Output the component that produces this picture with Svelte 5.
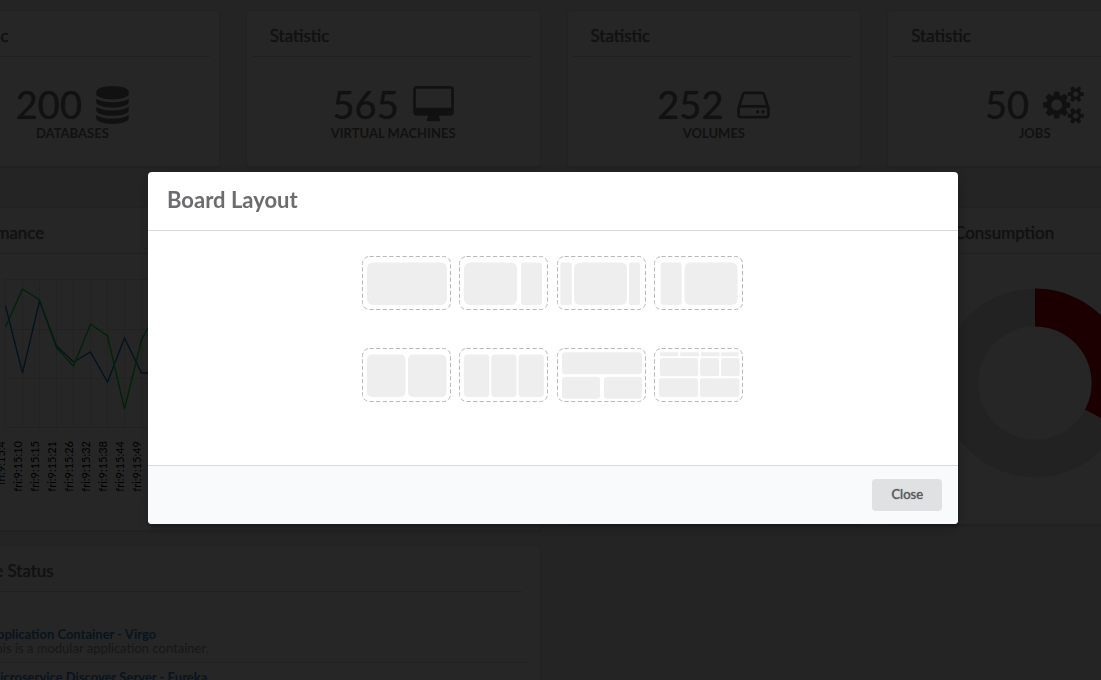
<script>
  const stats = [
    {
      value: '200', label: 'Databases', width: 33, box: '128 0 1536 1792',
      path: 'M896 768q237 0 443-43t325-127v170q0 69-103 128t-280 93.5-385 34.5-385-34.5-280-93.5-103-128v-170q119 84 325 127t443 43zm0 768q237 0 443-43t325-127v170q0 69-103 128t-280 93.5-385 34.5-385-34.5-280-93.5-103-128v-170q119 84 325 127t443 43zm0-384q237 0 443-43t325-127v170q0 69-103 128t-280 93.5-385 34.5-385-34.5-280-93.5-103-128v-170q119 84 325 127t443 43zm0-1152q208 0 385 34.5t280 93.5 103 128v128q0 69-103 128t-280 93.5-385 34.5-385-34.5-280-93.5-103-128v-128q0-69 103-128t280-93.5 385-34.5z'
    },
    {
      value: '565', label: 'Virtual Machines', width: 41, box: '0 0 1920 1792',
      path: 'M1792 992v-832q0-13-9.5-22.5t-22.5-9.5h-1600q-13 0-22.5 9.5t-9.5 22.5v832q0 13 9.5 22.5t22.5 9.5h1600q13 0 22.5-9.5t9.5-22.5zm128-832v1088q0 66-47 113t-113 47h-544q0 37 16 77.5t32 71 16 43.5q0 26-19 45t-45 19h-512q-26 0-45-19t-19-45q0-14 16-44t32-70 16-78h-544q-66 0-113-47t-47-113v-1088q0-66 47-113t113-47h1600q66 0 113 47t47 113z'
    },
    {
      value: '252', label: 'Volumes', width: 33, box: '128 0 1536 1792',
      path: 'M1168 1216q0 33-23.5 56.5t-56.5 23.5-56.5-23.5-23.5-56.5 23.5-56.5 56.5-23.5 56.5 23.5 23.5 56.5zm256 0q0 33-23.5 56.5t-56.5 23.5-56.5-23.5-23.5-56.5 23.5-56.5 56.5-23.5 56.5 23.5 23.5 56.5zm112 160v-320q0-13-9.5-22.5t-22.5-9.5h-1216q-13 0-22.5 9.5t-9.5 22.5v320q0 13 9.5 22.5t22.5 9.5h1216q13 0 22.5-9.5t9.5-22.5zm-1230-480h1180l-157-482q-4-13-16-21.5t-26-8.5h-782q-14 0-26 8.5t-16 21.5zm1358 160v320q0 66-47 113t-113 47h-1216q-66 0-113-47t-47-113v-320q0-25 16-75l197-606q17-53 63-86t101-33h782q55 0 101 33t63 86l197 606q16 50 16 75z'
    },
    {
      value: '50', label: 'Jobs', width: 41, box: '0 0 1920 1792',
      path: 'M896 896q0-106-75-181t-181-75-181 75-75 181 75 181 181 75 181-75 75-181zm768 512q0-52-38-90t-90-38-90 38-38 90q0 53 37.5 90.5t90.5 37.5 90.5-37.5 37.5-90.5zm0-1024q0-52-38-90t-90-38-90 38-38 90q0 53 37.5 90.5t90.5 37.5 90.5-37.5 37.5-90.5zm-384 421v185q0 10-7 19.5t-16 10.5l-155 24q-11 35-32 76 34 48 90 115 7 11 7 20 0 12-7 19-23 30-82.5 89.5t-78.5 59.5q-11 0-21-7l-115-90q-37 19-77 31-11 108-23 155-7 24-30 24h-186q-11 0-20-7.5t-10-17.5l-23-153q-34-10-75-31l-118 89q-7 7-20 7-11 0-21-8-144-133-144-160 0-9 7-19 10-14 41-53t47-61q-23-44-35-82l-152-24q-10-1-17-9.5t-7-19.5v-185q0-10 7-19.5t16-10.5l155-24q11-35 32-76-34-48-90-115-7-11-7-20 0-12 7-20 22-30 82-89t79-59q11 0 21 7l115 90q34-18 77-32 11-108 23-154 7-24 30-24h186q11 0 20 7.5t10 17.5l23 153q34 10 75 31l118-89q8-7 20-7 11 0 21 8 144 133 144 160 0 8-7 19-12 16-42 54t-45 60q23 48 34 82l152 23q10 2 17 10.5t7 19.5zm640 533v140q0 16-149 31-12 27-30 52 51 113 51 138 0 4-4 7-122 71-124 71-8 0-46-47t-52-68q-20 2-30 2t-30-2q-14 21-52 68t-46 47q-2 0-124-71-4-3-4-7 0-25 51-138-18-25-30-52-149-15-149-31v-140q0-16 149-31 13-29 30-52-51-113-51-138 0-4 4-7 4-2 35-20t59-34 30-16q8 0 46 46.5t52 67.5q20-2 30-2t30 2q51-71 92-112l6-2q4 0 124 70 4 3 4 7 0 25-51 138 17 23 30 52 149 15 149 31zm0-1024v140q0 16-149 31-12 27-30 52 51 113 51 138 0 4-4 7-122 71-124 71-8 0-46-47t-52-68q-20 2-30 2t-30-2q-14 21-52 68t-46 47q-2 0-124-71-4-3-4-7 0-25 51-138-18-25-30-52-149-15-149-31v-140q0-16 149-31 13-29 30-52-51-113-51-138 0-4 4-7 4-2 35-20t59-34 30-16q8 0 46 46.5t52 67.5q20-2 30-2t30 2q51-71 92-112l6-2q4 0 124 70 4 3 4 7 0 25-51 138 17 23 30 52 149 15 149 31z'
    }
  ];

  // Chart samples: time label, then the y of each series inside the plot.
  const samples = [
    ['fri:9:15:4', 52, 73],
    ['fri:9:15:10', 119, 35],
    ['fri:9:15:15', 47, 46],
    ['fri:9:15:21', 92, 94],
    ['fri:9:15:26', 108, 112],
    ['fri:9:15:32', 98, 70],
    ['fri:9:15:38', 128, 82],
    ['fri:9:15:44', 84, 155],
    ['fri:9:15:49', 119, 86],
    ['fri:9:15:55', 119, 54]
  ];
  const sampleX = (i) => 79.5 + i * 17;
  const blue = samples.map((s, i) => `${sampleX(i)},${s[1]}`).join(' ');
  const green = samples.map((s, i) => `${sampleX(i)},${s[2]}`).join(' ');
  const gridRows = [25.5, 75.5, 124.5, 173.5];

  const apps = [
    { name: 'Application Container - Virgo', text: 'This is a modular application container.' },
    { name: 'Microservice Discover Server - Eureka', text: 'This is a discovery server.' }
  ];

  // Each block: x, y, width, height, corner radius.
  const layouts = [
    { name: 'One column', blocks: [[5, 6.5, 80, 42.5, 6]] },
    { name: 'Wide and narrow', blocks: [[5, 6.5, 53, 42.5, 6], [62, 6.5, 21, 42.5, 3]] },
    { name: 'Wide between two narrow', blocks: [[3.3, 6.5, 11.5, 42.5, 2], [17, 6.5, 53, 42.5, 6], [72, 6.5, 11, 42.5, 2]] },
    { name: 'Narrow and wide', blocks: [[6.7, 6.5, 21, 42.5, 3], [30.5, 6.5, 53, 42.5, 6]] },
    { name: 'Two columns', blocks: [[5, 6.5, 38.5, 42.5, 5], [46, 6.5, 38.5, 42.5, 5]] },
    { name: 'Three columns', blocks: [[5, 6.5, 25.3, 42.5, 3.5], [32.2, 6.5, 25.3, 42.5, 3.5], [59.5, 6.5, 25.3, 42.5, 3.5]] },
    { name: 'Row over two columns', blocks: [[5, 4.3, 80, 22, 3], [5, 28.7, 38, 22, 3], [47, 28.7, 38, 22, 3]] },
    {
      name: 'Mixed grid',
      blocks: [
        [6, 4.3, 18.3, 4, 0.5], [26.2, 4.3, 18.8, 4, 0.5], [46.8, 4.3, 18.8, 4, 0.5], [66.8, 4.3, 18, 4, 0.5],
        [6, 9.9, 38.2, 18.4, 2.5], [46, 9.9, 19.2, 18.4, 2.5], [67, 9.9, 18.5, 18.4, 2.5],
        [5, 30.3, 39.2, 18.7, 2.5], [46, 30.3, 39.5, 18.7, 2.5]
      ]
    }
  ];

  let open = $state(true);
  let selected = $state('');
</script>

<main class="page">
  <div class="board">
    {#each stats as stat}
      <section class="card stat">
        <h3>Statistic</h3>
        <div class="figure">
          <div class="value">
            <span>{stat.value}</span>
            <svg width={stat.width} height="38" viewBox={stat.box} aria-hidden="true"><path d={stat.path} /></svg>
          </div>
          <div class="label">{stat.label}</div>
        </div>
      </section>
    {/each}

    <div class="column wide">
      <section class="card big performance">
        <h3>Performance</h3>
        <svg class="chart" height="250" aria-hidden="true">
          {#each gridRows as y}
            <line class="grid" x1="78" x2="570" y1={y} y2={y} />
          {/each}
          {#each samples as sample, i}
            <line class="grid" x1={sampleX(i)} x2={sampleX(i)} y1="25" y2="174" />
            <text transform="translate({sampleX(i) - 1} 187) rotate(-90)">{sample[0]}</text>
          {/each}
          <polyline class="blue" points={blue} />
          <polyline class="green" points={green} />
        </svg>
      </section>
      <section class="card big status">
        <h3>Service Status</h3>
        <ul>
          {#each apps as app}
            <li>
              <a href="#{app.name}">{app.name}</a>
              <p>{app.text}</p>
            </li>
          {/each}
        </ul>
      </section>
    </div>
    <section class="card gauge"><h3>Usage</h3></section>
    <section class="card gauge">
      <h3>CPU&nbsp; Consumption</h3>
      <svg width="190" height="190" viewBox="-95 -95 190 190" aria-hidden="true">
        <circle class="rest" r="75.5" />
        <path class="used" d="M0 -94.5A94.5 94.5 0 0 1 83.6 44L50 26.6A56.6 56.6 0 0 0 0 -56.6Z" />
      </svg>
    </section>
  </div>
</main>

{#if open}
  <div class="dimmer">
    <div class="modal" role="dialog" aria-modal="true" aria-labelledby="modal-title">
      <header><h2 id="modal-title">Board Layout</h2></header>
      <div class="content">
        <div class="layouts">
          {#each layouts as layout}
            <button
              class="layout"
              class:selected={selected === layout.name}
              aria-label={layout.name}
              onclick={() => (selected = layout.name)}
            >
              <svg width="89" height="54" viewBox="0 0 89 54" aria-hidden="true">
                <rect class="frame" x="0.5" y="0.5" width="88" height="53" rx="7" />
                {#each layout.blocks as [x, y, w, h, r]}
                  <rect class="block" {x} {y} width={w} height={h} rx={r} />
                {/each}
              </svg>
            </button>
          {/each}
        </div>
      </div>
      <footer><button class="close" onclick={() => (open = false)}>Close</button></footer>
    </div>
  </div>
{/if}

<style>
  :global(body) {
    background: #f0f0f0;
    font-family: Lato, 'Liberation Sans', sans-serif;
    font-size: 13px;
    color: #767676;
  }
  .page {
    height: 100vh;
    overflow: hidden;
  }
  .board {
    display: grid;
    grid-template-columns: repeat(4, 1fr);
    column-gap: 26px;
    row-gap: 40px;
    align-items: start;
    width: calc(100% + 156px);
    margin-left: -75px;
    padding-top: 10px;
  }
  .card {
    box-sizing: border-box;
    background: #fff;
    border: 1px solid #e2e2e3;
    border-radius: 4px;
    box-shadow: 0 1px 2px rgba(34, 36, 38, 0.15);
    overflow: hidden;
  }
  h3 {
    margin: 0 9px 0 5px;
    padding: 15px 18px 10px;
    border-bottom: 1px solid #d8d8d9;
    font-size: 17px;
    line-height: 20px;
    font-weight: 400;
    text-shadow: 0 0 1px currentColor;
  }
  .big h3 {
    margin-right: 18px;
  }
  .stat {
    height: 157px;
  }
  .figure {
    display: flex;
    flex-direction: column;
    align-items: center;
    padding-top: 27px;
  }
  .value {
    display: flex;
    align-items: flex-end;
    gap: 14px;
    font-size: 38px;
    line-height: 40px;
    text-shadow: 0 0 1px currentColor;
  }
  .value svg {
    fill: #767676;
  }
  .label {
    padding-top: 1px;
    font-size: 13px;
    line-height: 16px;
    font-weight: 700;
    text-transform: uppercase;
  }
  .wide {
    grid-column: span 2;
  }
  .column {
    display: flex;
    flex-direction: column;
    gap: 14px;
  }
  .performance {
    height: 324px;
  }
  .gauge {
    height: 318px;
  }
  .status {
    min-height: 200px;
  }
  .gauge svg {
    display: block;
    margin: 34px auto;
  }
  .rest {
    fill: none;
    stroke: #e0e0e0;
    stroke-width: 38;
  }
  .used {
    fill: #b9000c;
  }
  .chart {
    display: block;
    width: 100%;
  }
  .chart text {
    font-size: 11px;
    fill: #000;
    text-anchor: end;
  }
  .grid {
    stroke: #e0e0e0;
  }
  .blue,
  .green {
    fill: none;
    stroke-width: 1.4;
  }
  .blue {
    stroke: #1478c8;
  }
  .green {
    stroke: #00e03c;
  }
  ul {
    list-style: none;
    margin: 0;
    padding: 28px 12px 0 12px;
  }
  li {
    padding: 7px 0 7px 50px;
    border-bottom: 1px solid #e0e0e0;
    line-height: 14px;
  }
  li a {
    color: #4183c4;
    font-weight: 700;
    text-decoration: none;
  }
  li p {
    margin: 0;
    color: #999;
  }
  .dimmer {
    position: fixed;
    inset: 0;
    display: flex;
    align-items: center;
    justify-content: center;
    box-sizing: border-box;
    padding: 16px 0 0 5px;
    background: rgba(0, 0, 0, 0.85);
  }
  .modal {
    width: 810px;
    max-width: calc(100% - 32px);
    background: #fff;
    border-radius: 4px;
    box-shadow: 1px 3px 3px rgba(0, 0, 0, 0.2), 1px 3px 15px 2px rgba(0, 0, 0, 0.2);
    overflow: hidden;
  }
  header {
    padding: 14px 19px 16px;
    border-bottom: 1px solid #d9dadb;
  }
  h2 {
    margin: 0;
    font-size: 22px;
    line-height: 28px;
    font-weight: 700;
    color: #6c6c6e;
  }
  .content {
    display: flex;
    justify-content: center;
    padding: 25px 17px 63px 16px;
  }
  .layouts {
    display: grid;
    grid-template-columns: repeat(4, 89px);
    justify-content: space-between;
    row-gap: 38px;
    width: 381px;
  }
  .layout {
    display: block;
    padding: 0;
    border: 0;
    background: none;
    cursor: pointer;
  }
  .layout svg {
    display: block;
  }
  .frame {
    fill: none;
    stroke: #b8b8b8;
    stroke-dasharray: 4.2 2.4;
  }
  .block {
    fill: #eee;
  }
  .selected .frame {
    stroke: #4183c4;
  }
  footer {
    display: flex;
    justify-content: flex-end;
    padding: 13px 16px;
    background: #f9fafb;
    border-top: 1px solid #d9dadb;
  }
  .close {
    height: 32px;
    padding: 0 19px 2px;
    border: 0;
    border-radius: 4px;
    background: #e0e1e2;
    color: #5a5a5a;
    font-family: inherit;
    font-size: 13px;
    font-weight: 400;
    text-shadow: 0 0 1px currentColor;
    cursor: pointer;
  }
</style>
